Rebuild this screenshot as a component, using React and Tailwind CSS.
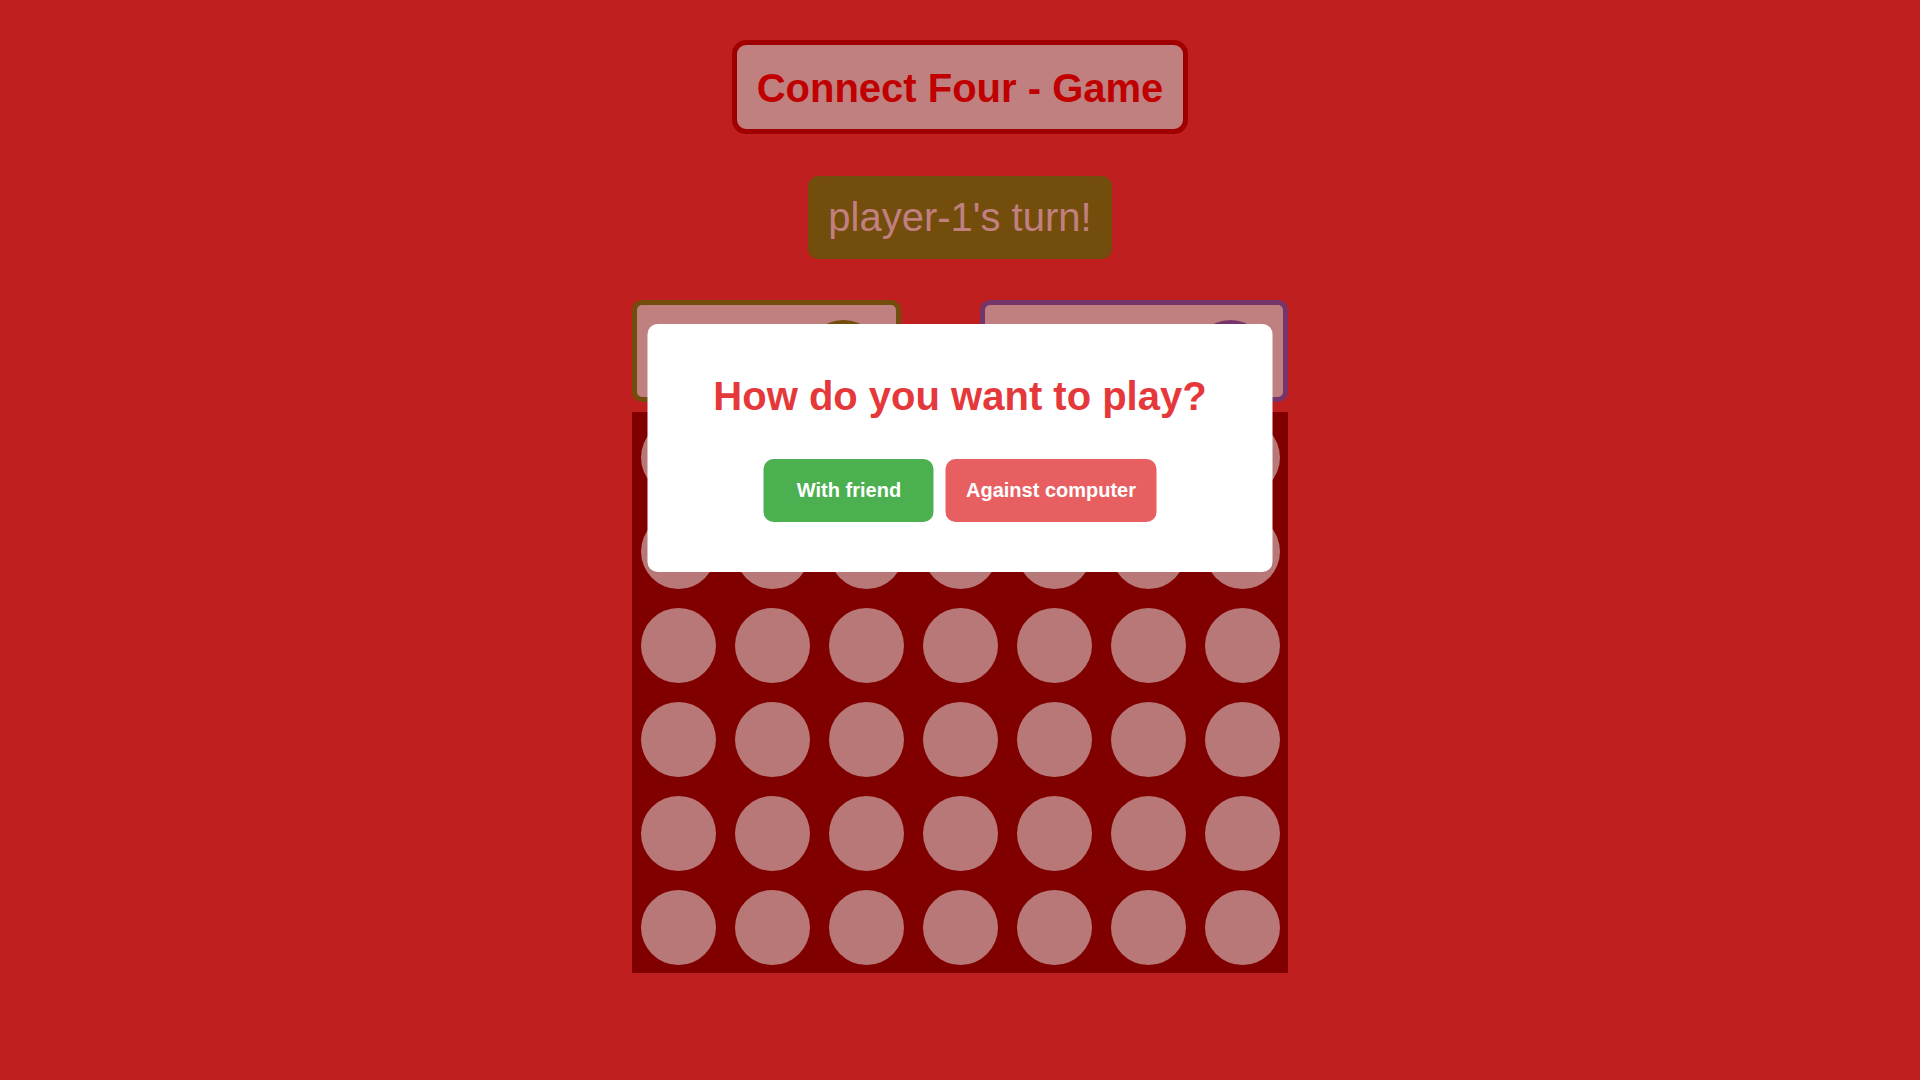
const ROWS = 6;
const COLS = 7;

const PlayerCard = ({ name, width, borderColor, discColor }) => {
    return (
        <div
            className={`${width} h-[102px] border-[5px] ${borderColor} bg-[#c08080] rounded-[10px] flex items-start justify-between pt-[15px] pl-[15px] pr-[15px]`}
        >
            <span className="text-[24px] leading-[28px] mt-[18px] text-[#800000] font-bold">{name}</span>
            <div className={`w-[75px] h-[75px] rounded-full ${discColor}`}></div>
        </div>
    );
};

const App = () => {
    const cells = [];
    for (let r = 0; r < ROWS; r++) {
        for (let c = 0; c < COLS; c++) {
            cells.push(<div key={r + '-' + c} className="w-[75px] h-[75px] rounded-full bg-[#b87878]"></div>);
        }
    }

    return (
        <div className="relative min-h-screen bg-[#bf1f1f] flex flex-col items-center pt-10 font-['Liberation_Sans',Arial,sans-serif]">
            <h1 className="border-[5px] border-[#a00000] rounded-[14px] bg-[#c08080] px-5 pt-[20px] pb-[18px] text-[40px] leading-[46px] font-bold text-[#c00000]">
                Connect Four - Game
            </h1>

            <div className="mt-[42px] bg-[#734d0c] rounded-[10px] px-5 py-[18px] text-[40px] leading-[47px] text-[#c08080]">
                player-1's turn!
            </div>

            <div className="mt-[41px] w-[656px] flex justify-between">
                <PlayerCard name="player-1" width="w-[269px]" borderColor="border-[#734d0c]" discColor="bg-[#734d0c]" />
                <PlayerCard name="player-2" width="w-[308px]" borderColor="border-[#76356a]" discColor="bg-[#76356a]" />
            </div>

            <div className="mt-[10px] w-[656px] bg-[#800000] grid grid-cols-[repeat(7,75px)] gap-[19px] pl-[9px] pr-[8px] py-[8px]">
                {cells}
            </div>

            {/* mode picker */}
            <div className="absolute left-1/2 -translate-x-1/2 top-[324px] w-[625px] h-[248px] bg-white rounded-[10px] flex flex-col items-center pt-[49px]">
                <h2 className="text-[40px] leading-[46px] font-bold text-[#e5383b]">How do you want to play?</h2>
                <div className="mt-[40px] flex gap-3">
                    <button className="w-[170px] py-5 text-[20px] leading-[23px] font-bold text-white bg-[#4caf50] rounded-[10px]">
                        With friend
                    </button>
                    <button className="px-5 py-5 text-[20px] leading-[23px] font-bold text-white bg-[#e85f62] rounded-[10px]">
                        Against computer
                    </button>
                </div>
            </div>
        </div>
    );
};

export default App;
